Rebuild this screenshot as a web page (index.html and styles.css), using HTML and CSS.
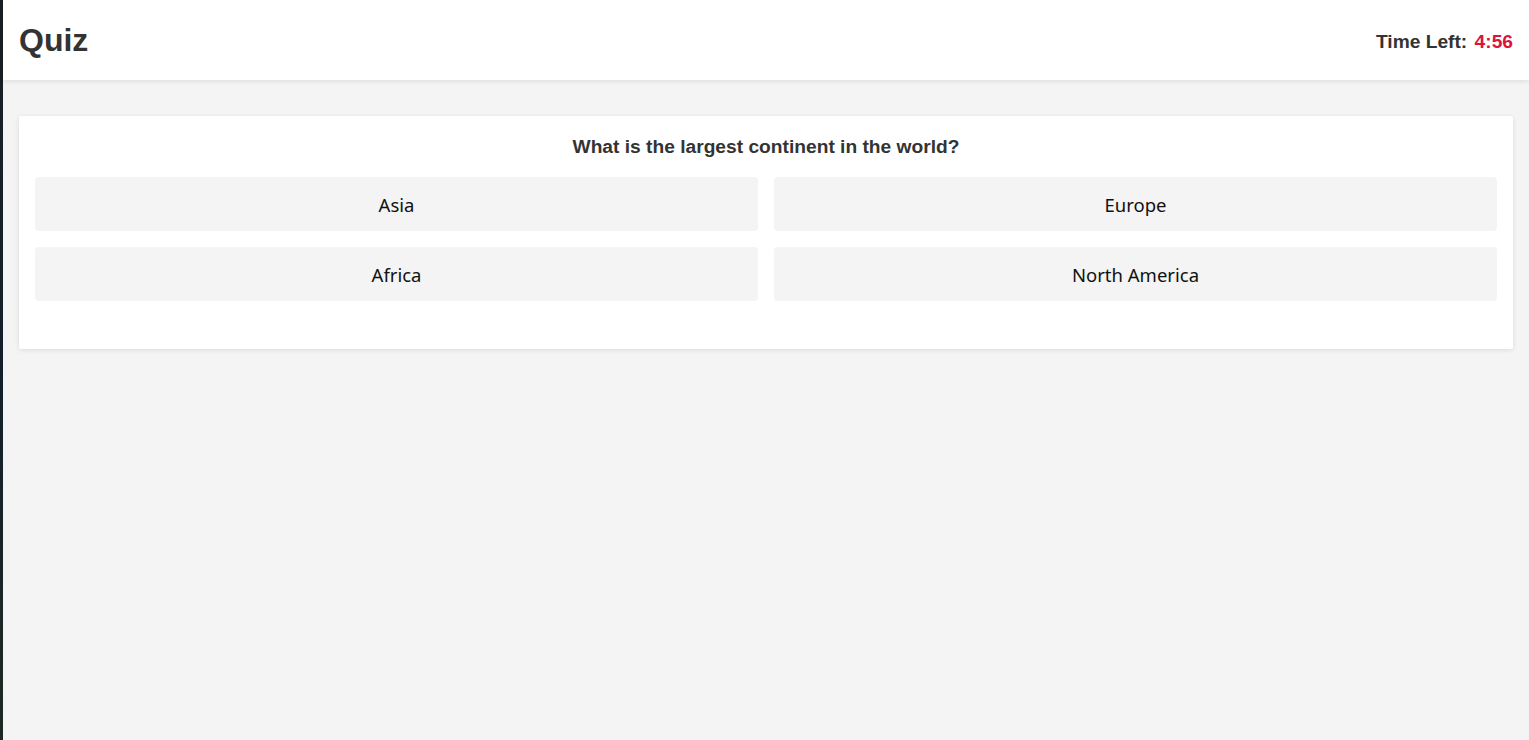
FILE: index.html
```html
<!DOCTYPE html>
<html>
<head>
<meta charset="utf-8">
<link rel="stylesheet" href="styles.css">
</head>
<body>
<div class="edge"></div>
<div class="app">
  <header class="header">
    <h1 class="title">Quiz</h1>
    <div class="timer">Time Left: <span class="time">4:56</span></div>
  </header>
  <main class="main">
    <section class="card">
      <h2 class="question">What is the largest continent in the world?</h2>
      <div class="options">
        <button class="option">Asia</button>
        <button class="option">Europe</button>
        <button class="option">Africa</button>
        <button class="option">North America</button>
      </div>
    </section>
  </main>
</div>
</body>
</html>
```
FILE: styles.css
```css
html, body {
  margin: 0;
  height: 100%;
}
body {
  display: flex;
  background: #f4f4f4;
  font-family: "Liberation Sans", Arial, sans-serif;
  color: #333;
}
.edge {
  width: 3px;
  flex: none;
  background: linear-gradient(#1b1f24, #12202c 50%, #1d2a22);
}
.app {
  flex: 1;
  min-width: 0;
  display: flex;
  flex-direction: column;
}
.header {
  height: 80px;
  box-sizing: border-box;
  background: #fff;
  display: flex;
  align-items: center;
  justify-content: space-between;
  padding: 0 16px;
  box-shadow: 0 2px 4px rgba(0,0,0,0.08);
  position: relative;
}
.title {
  margin: 0;
  font-size: 32px;
  font-weight: bold;
}
.timer {
  font-size: 19.2px;
  font-weight: bold;
  padding-top: 3px;
}
.time {
  color: #dc143c;
  margin-left: 2px;
}
.main {
  padding: 36px 16px;
}
.card {
  background: #fff;
  border-radius: 2px;
  box-shadow: 0 1px 5px rgba(0,0,0,0.1);
  padding: 20px 16px 48px;
}
.question {
  margin: 0 0 19px;
  text-align: center;
  font-size: 19.2px;
  font-weight: bold;
  line-height: 22px;
}
.options {
  display: grid;
  grid-template-columns: 1fr 1fr;
  column-gap: 16px;
  row-gap: 16px;
}
.option {
  height: 54px;
  border: none;
  border-radius: 4px;
  background: #f4f4f4;
  font-family: "Noto Sans", "Open Sans", sans-serif;
  font-size: 18.5px;
  color: #111;
  cursor: pointer;
}
```
